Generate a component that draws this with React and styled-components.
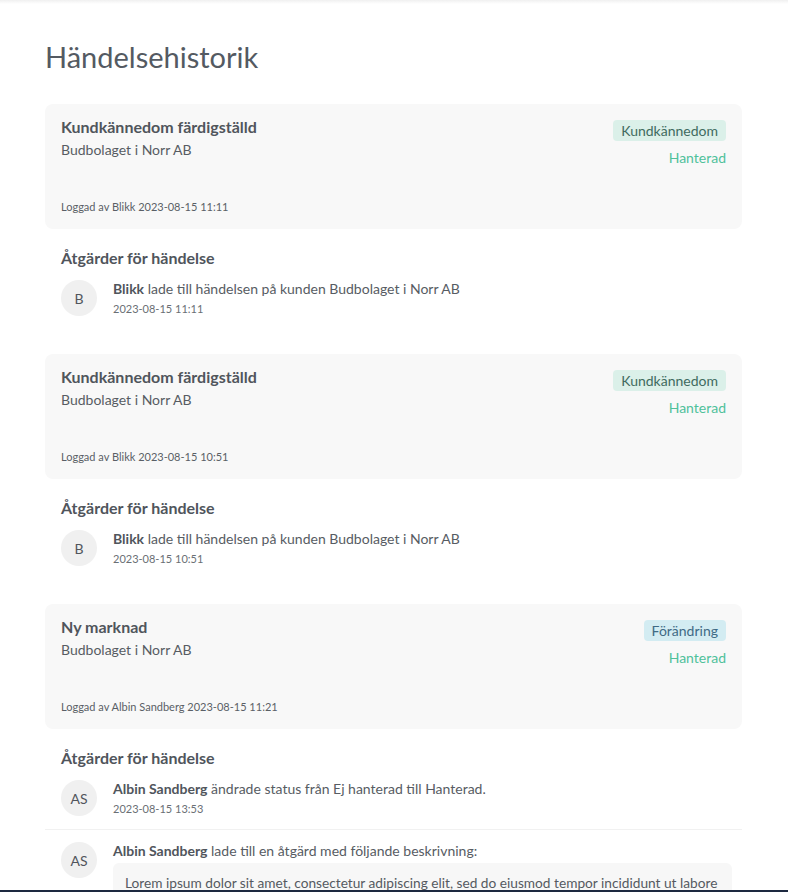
import React from 'react'
import styled, { createGlobalStyle } from 'styled-components'

const GlobalStyle = createGlobalStyle`
  html, body {
    margin: 0;
    padding: 0;
    background: #ffffff;
  }
  body {
    font-family: Lato, "Open Sans", "Liberation Sans", sans-serif;
    color: #52575e;
    -webkit-font-smoothing: antialiased;
  }
  * {
    box-sizing: border-box;
  }
`

const TopShade = styled.div`
  height: 4px;
  background: linear-gradient(to bottom, #f0f0f0, #ffffff);
`

const BottomLine = styled.div`
  position: fixed;
  left: 0;
  right: 0;
  bottom: 0;
  height: 2px;
  background: #1d2940;
`

const Page = styled.main`
  padding: 35px 46px 40px 45px;
`

const Title = styled.h1`
  margin: 0 0 29px;
  font-size: 29px;
  font-weight: 400;
  line-height: 36px;
  color: #545a62;
`

const Card = styled.section`
  display: flex;
  flex-direction: column;
  height: 125px;
  padding: 14px 16px 15px;
  background: #f8f8f8;
  border-radius: 8px;
`

const CardTop = styled.div`
  display: flex;
  justify-content: space-between;
  align-items: flex-start;
`

const CardTitle = styled.div`
  font-size: 16px;
  font-weight: 700;
  line-height: 18px;
  color: #50555c;
`

const CardSub = styled.div`
  margin-top: 5px;
  font-size: 14px;
  line-height: 18px;
  color: #575c63;
`

const Side = styled.div`
  display: flex;
  flex-direction: column;
  align-items: flex-end;
  padding-top: 2px;
`

const Badge = styled.span`
  display: inline-block;
  height: 21px;
  padding: 0 8px;
  border-radius: 4px;
  font-size: 14px;
  line-height: 21px;
  background: ${p => (p.$kind === 'change' ? '#d3ecf2' : '#dbf0e9')};
  color: ${p => (p.$kind === 'change' ? '#3f6a85' : '#3f6b60')};
`

const Status = styled.span`
  margin-top: 7px;
  font-size: 14px;
  line-height: 20px;
  color: #4fc19b;
`

const CardFoot = styled.div`
  margin-top: auto;
  font-size: 11px;
  line-height: 14px;
  color: #5a5f66;
`

const Actions = styled.section`
  padding-top: 19px;
  margin-bottom: 25px;
`

const ActionsTitle = styled.h3`
  margin: 0;
  padding: 0 16px;
  font-size: 16px;
  font-weight: 700;
  line-height: 20px;
  color: #50555c;
`

const Row = styled.div`
  display: flex;
  gap: 16px;
  padding: 12px 10px 12px 16px;
  border-bottom: ${p => (p.$last ? 'none' : '1px solid #f1f1f1')};
`

const Avatar = styled.div`
  flex: 0 0 36px;
  width: 36px;
  height: 36px;
  border-radius: 50%;
  background: #f0f0f0;
  display: flex;
  align-items: center;
  justify-content: center;
  font-size: 14px;
  color: #50555c;
`

const Body = styled.div`
  flex: 1;
  min-width: 0;
`

const Text = styled.div`
  font-size: 14px;
  line-height: 18px;
  color: #575c63;
  b {
    font-weight: 700;
    color: #50555c;
  }
`

const When = styled.div`
  margin-top: 3px;
  font-size: 11px;
  line-height: 16px;
  color: #6a6f75;
`

const Quote = styled.div`
  margin-top: 3px;
  padding: 10px 12px;
  background: #f7f7f7;
  border-radius: 6px;
  font-size: 13.7px;
  line-height: 20px;
  color: #555a61;
`

const events = [
  {
    title: 'Kundkännedom färdigställd',
    customer: 'Budbolaget i Norr AB',
    badge: 'Kundkännedom',
    kind: 'kyc',
    logged: 'Loggad av Blikk 2023-08-15 11:11',
    actions: [
      { initials: 'B', name: 'Blikk', text: ' lade till händelsen på kunden Budbolaget i Norr AB', when: '2023-08-15 11:11' },
    ],
  },
  {
    title: 'Kundkännedom färdigställd',
    customer: 'Budbolaget i Norr AB',
    badge: 'Kundkännedom',
    kind: 'kyc',
    logged: 'Loggad av Blikk 2023-08-15 10:51',
    actions: [
      { initials: 'B', name: 'Blikk', text: ' lade till händelsen på kunden Budbolaget i Norr AB', when: '2023-08-15 10:51' },
    ],
  },
  {
    title: 'Ny marknad',
    customer: 'Budbolaget i Norr AB',
    badge: 'Förändring',
    kind: 'change',
    logged: 'Loggad av Albin Sandberg 2023-08-15 11:21',
    actions: [
      { initials: 'AS', name: 'Albin Sandberg', text: ' ändrade status från Ej hanterad till Hanterad.', when: '2023-08-15 13:53' },
      {
        initials: 'AS',
        name: 'Albin Sandberg',
        text: ' lade till en åtgärd med följande beskrivning:',
        quote: 'Lorem ipsum dolor sit amet, consectetur adipiscing elit, sed do eiusmod tempor incididunt ut labore et dolore magna aliqua. Ut enim ad minim veniam, quis nostrud exercitation ullamco laboris.',
        when: '2023-08-15 13:54',
      },
    ],
  },
]

const App = () => (
  <>
    <GlobalStyle />
    <TopShade />
    <Page>
      <Title>Händelsehistorik</Title>
      {events.map((ev, i) => (
        <div key={i}>
          <Card>
            <CardTop>
              <div>
                <CardTitle>{ev.title}</CardTitle>
                <CardSub>{ev.customer}</CardSub>
              </div>
              <Side>
                <Badge $kind={ev.kind}>{ev.badge}</Badge>
                <Status>Hanterad</Status>
              </Side>
            </CardTop>
            <CardFoot>{ev.logged}</CardFoot>
          </Card>
          <Actions>
            <ActionsTitle>Åtgärder för händelse</ActionsTitle>
            {ev.actions.map((a, j) => (
              <Row key={j} $last={j === ev.actions.length - 1}>
                <Avatar>{a.initials}</Avatar>
                <Body>
                  <Text>
                    <b>{a.name}</b>
                    {a.text}
                  </Text>
                  {a.quote ? <Quote>{a.quote}</Quote> : null}
                  <When>{a.when}</When>
                </Body>
              </Row>
            ))}
          </Actions>
        </div>
      ))}
    </Page>
    <BottomLine />
  </>
)

export default App
